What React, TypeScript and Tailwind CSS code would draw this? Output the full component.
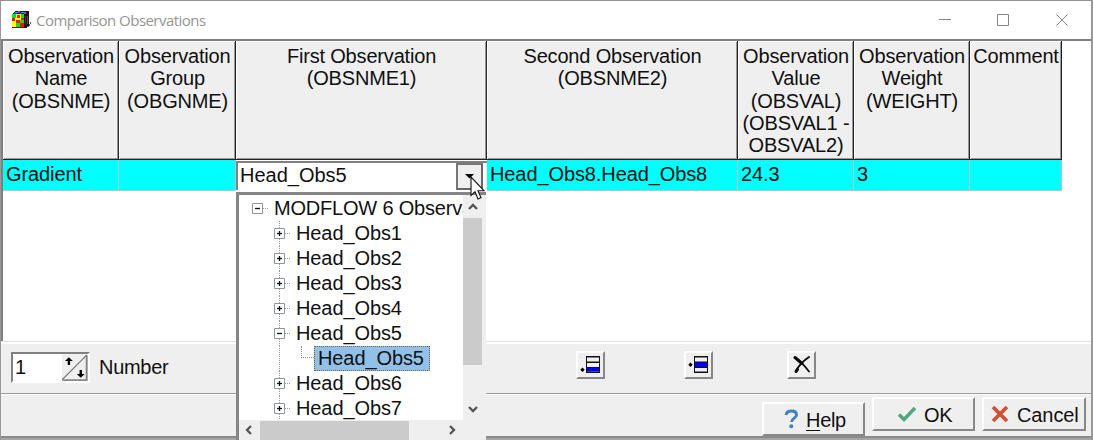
import React from "react";

const TEXT = "font-['Liberation_Sans',Arial,sans-serif] text-[20px] leading-[22.3px] text-[#101010]";

const COLUMNS = [
  { lines: ["Observation", "Name", "(OBSNME)"], value: "Gradient" },
  { lines: ["Observation", "Group", "(OBGNME)"], value: "" },
  { lines: ["First Observation", "(OBSNME1)"], value: null },
  { lines: ["Second Observation", "(OBSNME2)"], value: "Head_Obs8.Head_Obs8" },
  { lines: ["Observation", "Value", "(OBSVAL)", "(OBSVAL1 -", "OBSVAL2)"], value: "24.3" },
  { lines: ["Observation", "Weight", "(WEIGHT)"], value: "3" },
  { lines: ["Comment"], value: "" },
];

function AppIcon() {
  return (
    <svg className="ml-[11px] h-[19px] w-[21px] shrink-0" viewBox="0 0 21 19" shapeRendering="crispEdges">
      <path d="M0 4 3 0H17V14L14 17H11V4Z" fill="#171717" />
      <path d="M3 1h3v1H3zM9 1h3v1H9z" fill="#00b7ff" />
      <path d="M6 0h2v2H6zM12 1h2v2h-2z" fill="#b030e0" />
      <path d="M2 2h3v1H2zM8 2h2v1H8z" fill="#1838ff" />
      <path d="M0 3h12v13H0z" fill="#ffff00" />
      <path d="M0 3h4v4H0zM9 3h3v4H9zM4 12h4v4H4zM8 9h4v3H8z" fill="#00e818" />
      <path d="M5 4h3v3H5zM0 7h3v3H0zM4 9h4v3H4zM9 7h3v2H9zM8 12h4v4H8z" fill="#ff1010" />
      <path d="M13 5h1v9h-1z" fill="#6b2a1d" />
      <path d="M15 5h1v8h-1z" fill="#555" />
      <path d="M0 16h12v1H0z" fill="#4b2517" />
      <path d="M18 11h1v2h-1zM17 13h1v2h-1zM15 15h2v1h-2z" fill="#555" />
    </svg>
  );
}

function TitleBar() {
  return (
    <div className="flex h-[38px] shrink-0 items-center bg-white">
      <AppIcon />
      <span className="ml-[3px] font-['Open_Sans',sans-serif] text-[15px] leading-[20px] tracking-[-0.54px] whitespace-nowrap text-[#959595]">
        Comparison Observations
      </span>
      <svg className="ml-auto mr-[22px] h-[14px] w-[131px]" viewBox="0 0 131 14" fill="none" stroke="#858585">
        <path d="M1 6.500H13" />
        <path d="M59.500 1.500h11v11h-11z" />
        <path d="M118.500 1.500l11 11M129.500 1.500l-11 11" />
      </svg>
    </div>
  );
}

function ComboEditor() {
  return (
    <div className="mt-[1px] flex h-[29px] border-t-2 border-l-2 border-[#808080] bg-white">
      <span className="grow pl-[2px] leading-[25px]">Head_Obs5</span>
      <span className="mr-[4px] flex h-[27px] w-[27px] items-center justify-center border-2 border-t-[#777] border-r-[#666] border-b-[#666] border-l-[#777] bg-[#efefef]">
        <svg className="h-[5px] w-[9px]" viewBox="0 0 9 5">
          <path d="M0 0h9L4.500 4.500z" fill="#000" />
        </svg>
      </span>
    </div>
  );
}

function Grid() {
  return (
    <div className="h-[303px] shrink-0 border-t-2 border-l-2 border-[#808080] bg-white">
      <div className="grid w-[1059px] grid-cols-[116px_117px_251px_251px_116px_116px_92px]">
        {COLUMNS.map((c, i) => (
          <div
            key={i}
            className={`${TEXT} h-[119px] border-r border-b border-r-[#222] border-b-[#222] bg-[#efefef] shadow-[inset_1px_1px_0_#fff,inset_-1px_-1px_0_#999]`}
          >
            <div className="flex flex-col items-center pt-[4px] pl-[1px]">
              {c.lines.map((l) => (
                <span key={l} className="tracking-[-0.18px] whitespace-nowrap">
                  {l}
                </span>
              ))}
            </div>
          </div>
        ))}
        {COLUMNS.map((c, i) =>
          c.value === null ? (
            <div key={i} className={`${TEXT} h-[31px] bg-white`}>
              <ComboEditor />
            </div>
          ) : (
            <div
              key={i}
              className={`${TEXT} h-[31px] border-r border-b border-[#a9c9c9] bg-[#00ffff] pl-[3px] leading-[29px] tracking-[-0.1px] whitespace-nowrap`}
            >
              {c.value}
            </div>
          )
        )}
      </div>
    </div>
  );
}

function ToggleBox({ open }: { open: boolean }) {
  return (
    <svg className="h-[25px] w-[18px] shrink-0" viewBox="0 0 18 25" fill="none">
      <path d="M.5 7.500h10v10H.5z" fill="#fff" stroke="#8f959d" />
      <path d="M3 12.500h5" stroke="#111" strokeWidth="1.300" />
      {!open && <path d="M5.500 10v5" stroke="#111" strokeWidth="1.300" />}
      <path d="M11 12.500h6" stroke="#999" strokeDasharray="1 1" />
    </svg>
  );
}

function TreeNode({ label, open = false }: { label: string; open?: boolean }) {
  return (
    <div className="flex h-[25px] items-center bg-[linear-gradient(to_bottom,#999_50%,transparent_50%)] bg-[length:1px_2px] bg-[position:40px_0] bg-repeat-y pl-[35px]">
      <ToggleBox open={open} />
      <span className="ml-[4px] tracking-[-0.1px]">{label}</span>
    </div>
  );
}

function Chevron({ d, className }: { d: string; className: string }) {
  return (
    <svg className={className} viewBox="0 0 10 10" fill="none" stroke="#555" strokeWidth="2.300">
      <path d={d} />
    </svg>
  );
}

function TreeDropdown() {
  return (
    <div className={`${TEXT} absolute top-[191px] left-[235px] flex h-[248px] w-[250px] flex-col border-t-[3px] border-l-[3px] border-[#858585] bg-white`}>
      <div className="flex h-[225px] shrink-0">
        <div className="w-[224px] overflow-hidden pt-[1px] whitespace-nowrap">
          <div className="flex h-[25px] items-center pl-[13px]">
            <ToggleBox open />
            <span className="ml-[4px] tracking-[-0.2px]">MODFLOW 6 Observations</span>
          </div>
          <TreeNode label="Head_Obs1" />
          <TreeNode label="Head_Obs2" />
          <TreeNode label="Head_Obs3" />
          <TreeNode label="Head_Obs4" />
          <TreeNode label="Head_Obs5" open />
          <div className="flex h-[25px] bg-[linear-gradient(to_bottom,#999_50%,transparent_50%)] bg-[length:1px_2px] bg-[position:40px_0] bg-repeat-y pl-[62px]">
            <span className="h-[12px] w-[13px] border-b border-l border-dotted border-[#888]" />
            <span className="h-[25px] w-[116px] border border-dotted border-[#795c45] bg-[#91c1e8] pl-[3px] leading-[23px] tracking-[-0.1px]">
              Head_Obs5
            </span>
          </div>
          <TreeNode label="Head_Obs6" />
          <TreeNode label="Head_Obs7" />
        </div>
        <div className="flex w-[23px] flex-col bg-[#efefef] pr-[4px]">
          <Chevron className="mx-auto mt-[7px] h-[10px] w-[10px]" d="M1 7 5 3 9 7" />
          <div className="mt-[6px] h-[147px] bg-[#cbcbcb]" />
          <Chevron className="mx-auto mt-[39px] h-[10px] w-[10px]" d="M1 3 5 7 9 3" />
        </div>
      </div>
      <div className="flex h-[20px] items-center bg-[#efefef] pl-[5px]">
        <Chevron className="h-[10px] w-[10px]" d="M7 1 3 5 7 9" />
        <div className="ml-[6px] h-[19px] w-[149px] bg-[#cbcbcb]" />
        <Chevron className="ml-[38px] h-[10px] w-[10px]" d="M3 1 7 5 3 9" />
      </div>
    </div>
  );
}

const RAISED = "border-t-2 border-l-2 border-r-2 border-b-2 border-t-white border-l-white border-r-[#888] border-b-[#888] bg-[#efefef]";

function RowButton({ kind, className }: { kind: "add" | "insert" | "delete"; className: string }) {
  return (
    <div className={`${RAISED} h-[28px] w-[29px] ${className}`}>
      <svg className="h-[24px] w-[25px]" viewBox="0 0 25 24">
        {kind === "delete" ? (
          <g fill="none" stroke="#0b0b0b" strokeLinecap="round">
            <path d="M6 4.500Q12 8 20 18.500" strokeWidth="1.800" />
            <path d="M6 4.500 13 10.500" strokeWidth="3" />
            <path d="M20 4Q11 10 7 18" strokeWidth="2" />
            <path d="M8.500 16.500 7 18.500" strokeWidth="3" />
          </g>
        ) : (
          <g>
            <path d="M8 3h14v17H8z" fill="#111" />
            <path d="M9 4.500h12v4H9zM9 10h12v4H9zM9 15h12v3.500H9z" fill="#efefef" />
            <path d={kind === "add" ? "M9 14.500h12v4H9z" : "M9 9.500h12v4.500H9z"} fill="#0000ff" />
            <path
              d={kind === "add" ? "M4.500 14.500l2.200 2.200-2.200 2.200-2.200-2.200z" : "M4.500 9.500l2.200 2.200-2.200 2.200-2.200-2.200z"}
              fill="#000"
            />
          </g>
        )}
      </svg>
    </div>
  );
}

function RowToolbar() {
  return (
    <div className="flex h-[52px] shrink-0 border-t-2 border-b border-t-white border-b-[#9b9b9b] bg-[#efefef] shadow-[0_-1px_0_#e0e0e0]">
      <div className="mt-[8px] ml-[10px] flex h-[31px] w-[79px] shrink-0 border-2 border-t-[#808080] border-r-white border-b-white border-l-[#808080] bg-white">
        <span className={`${TEXT} w-[50px] pl-[2px] leading-[26px]`}>1</span>
        <svg className="h-[27px] w-[26px]" viewBox="0 0 26 27">
          <path d="M0 0h26v27H0z" fill="#efefef" />
          <path d="M.5 26.500H25V1" fill="none" stroke="#888" strokeWidth="2" />
          <path d="M0 26 25 1" stroke="#777" strokeWidth="1.300" />
          <path d="M7 3l4 4H8.200v4H5.800V7H3z" fill="#000" />
          <path d="M19 24l-4-4h2.800v-4h2.400v4H23z" fill="#000" />
        </svg>
      </div>
      <span className={`${TEXT} mt-[12px] ml-[9px] w-[71px] tracking-[-0.3px]`}>Number</span>
      <RowButton kind="add" className="mt-[7px] ml-[406px]" />
      <RowButton kind="insert" className="mt-[7px] ml-[79px]" />
      <RowButton kind="delete" className="mt-[7px] ml-[74px]" />
    </div>
  );
}

function Footer() {
  return (
    <div className="flex h-[44px] shrink-0 border-t border-b-2 border-t-white border-b-[#8b8b8b] bg-[#efefef]">
      <div className={`${TEXT} ${RAISED} mt-[7px] ml-[761px] flex h-[34px] w-[103px] items-center`}>
        <svg className="ml-[20px] h-[20px] w-[15px]" viewBox="0 0 15 20">
          <path d="M2 6C2.500 2.800 5 2 7.500 2c3.200 0 5 1.600 5 4 0 3-5 3.300-5 7" fill="none" stroke="#4480bd" strokeWidth="2.900" />
          <circle cx="7.300" cy="17.300" r="2" fill="#4480bd" />
        </svg>
        <span className="ml-[7px] pt-[3px] tracking-[-0.3px]">
          <span className="underline decoration-1 underline-offset-[3px]">H</span>elp
        </span>
      </div>
      <div className={`${TEXT} ${RAISED} mt-[2px] ml-[7px] flex h-[34px] w-[103px] items-center`}>
        <svg className="ml-[23px] h-[18px] w-[20px]" viewBox="0 0 20 18">
          <path d="M2 9.500 7 14.500 18 3" fill="none" stroke="#52a681" strokeWidth="3.500" />
        </svg>
        <span className="ml-[7px] pt-[2px] tracking-[-0.3px]">OK</span>
      </div>
      <div className={`${TEXT} ${RAISED} mt-[2px] ml-[7px] flex h-[34px] w-[104px] items-center`}>
        <svg className="ml-[7px] h-[18px] w-[18px]" viewBox="0 0 18 18">
          <path d="M2 2 16 16M16 2 2 16" fill="none" stroke="#d05136" strokeWidth="3.800" />
        </svg>
        <span className="ml-[8px] pt-[2px] tracking-[-0.1px]">Cancel</span>
      </div>
    </div>
  );
}

function Pointer() {
  return (
    <svg className="absolute top-[175px] left-[469px] h-[25px] w-[16px]" viewBox="0 0 16 25">
      <path d="M1 1v18.500l4-3.700 3 7.200 3-1.300-3-7h6z" fill="#fff" stroke="#111" strokeWidth="1.100" />
    </svg>
  );
}

export default function App() {
  return (
    <div className="relative flex h-[440px] w-[1093px] flex-col overflow-hidden border-t border-r-2 border-l border-t-[#929292] border-r-[#999] border-l-[#999] bg-white">
      <TitleBar />
      <Grid />
      <RowToolbar />
      <Footer />
      <div className="h-[2px] bg-[#a5a5a5]" />
      <TreeDropdown />
      <Pointer />
    </div>
  );
}
